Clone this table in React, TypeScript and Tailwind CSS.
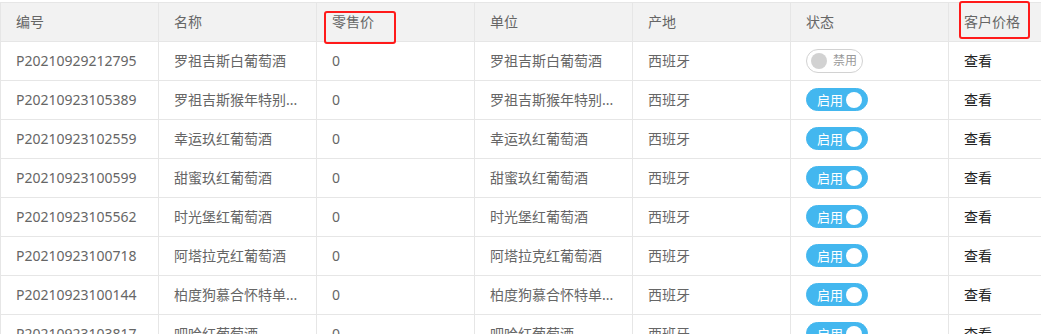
import React from "react";

const rows: [string, string, string, boolean][] = [
  ["P20210929212795", "罗祖吉斯白葡萄酒", "罗祖吉斯白葡萄酒", false],
  ["P20210923105389", "罗祖吉斯猴年特别...", "罗祖吉斯猴年特别...", true],
  ["P20210923102559", "幸运玖红葡萄酒", "幸运玖红葡萄酒", true],
  ["P20210923100599", "甜蜜玖红葡萄酒", "甜蜜玖红葡萄酒", true],
  ["P20210923105562", "时光堡红葡萄酒", "时光堡红葡萄酒", true],
  ["P20210923100718", "阿塔拉克红葡萄酒", "阿塔拉克红葡萄酒", true],
  ["P20210923100144", "柏度狗慕合怀特单...", "柏度狗慕合怀特单...", true],
  ["P20210923103817", "吧哈红葡萄酒", "吧哈红葡萄酒", true],
];

const headers = ["编号", "名称", "零售价", "单位", "产地", "状态", "客户价格"];

function Cell({ children, head }: { children: React.ReactNode; head?: boolean }) {
  return (
    <div
      className={`w-[158px] shrink-0 h-[38px] border-r border-[#e6e6e6] px-[15px] py-[9px] leading-[20px] text-[14px] whitespace-nowrap overflow-hidden ${
        head ? "bg-[#f2f2f2]" : ""
      }`}
    >
      {children}
    </div>
  );
}

function Switch({ on }: { on: boolean }) {
  if (on) {
    return (
      <div className="mt-[-1px] flex items-center w-[62px] h-[23px] rounded-full border border-[#43b7ef] bg-[#43b7ef] pl-[10px]">
        <span className="w-[26px] text-[13px] leading-[20px] text-white">启用</span>
        <span className="ml-[3px] w-[16px] h-[16px] rounded-full bg-white" />
      </div>
    );
  }
  return (
    <div className="mt-[-1px] flex items-center w-[57px] h-[24px] rounded-full border border-[#d2d2d2] bg-white pl-[4px]">
      <span className="w-[16px] h-[16px] rounded-full bg-[#d2d2d2]" />
      <span className="ml-[6px] w-[25px] text-[12px] leading-[20px] text-[#999]">禁用</span>
    </div>
  );
}

export default function App() {
  return (
    <div
      className="relative w-[1041px] h-[334px] overflow-hidden bg-white pt-[2px] text-[#666]"
      style={{ fontFamily: '"Noto Sans", "Noto Sans CJK SC", sans-serif' }}
    >
      <div className="w-[1200px] border-l border-t border-[#e6e6e6]">
        <div className="flex border-b border-[#e6e6e6]">
          {headers.map((h) => (
            <Cell key={h} head>
              {h}
            </Cell>
          ))}
        </div>
        {rows.map((r) => (
          <div key={r[0]} className="flex border-b border-[#e6e6e6]">
            <Cell>{r[0]}</Cell>
            <Cell>{r[1]}</Cell>
            <Cell>0</Cell>
            <Cell>{r[2]}</Cell>
            <Cell>西班牙</Cell>
            <div className="w-[158px] shrink-0 h-[38px] border-r border-[#e6e6e6] px-[15px] pt-[8px]">
              <Switch on={r[3]} />
            </div>
            <Cell>
              <span className="text-[#222]">查看</span>
            </Cell>
          </div>
        ))}
      </div>
      <div className="absolute left-[324px] top-[11px] w-[72px] h-[33px] border-2 border-[#ff1a1a] rounded-[3px]" />
      <div className="absolute left-[959px] top-[1px] w-[71px] h-[38px] border-2 border-[#ff1a1a] rounded-[3px]" />
    </div>
  );
}
